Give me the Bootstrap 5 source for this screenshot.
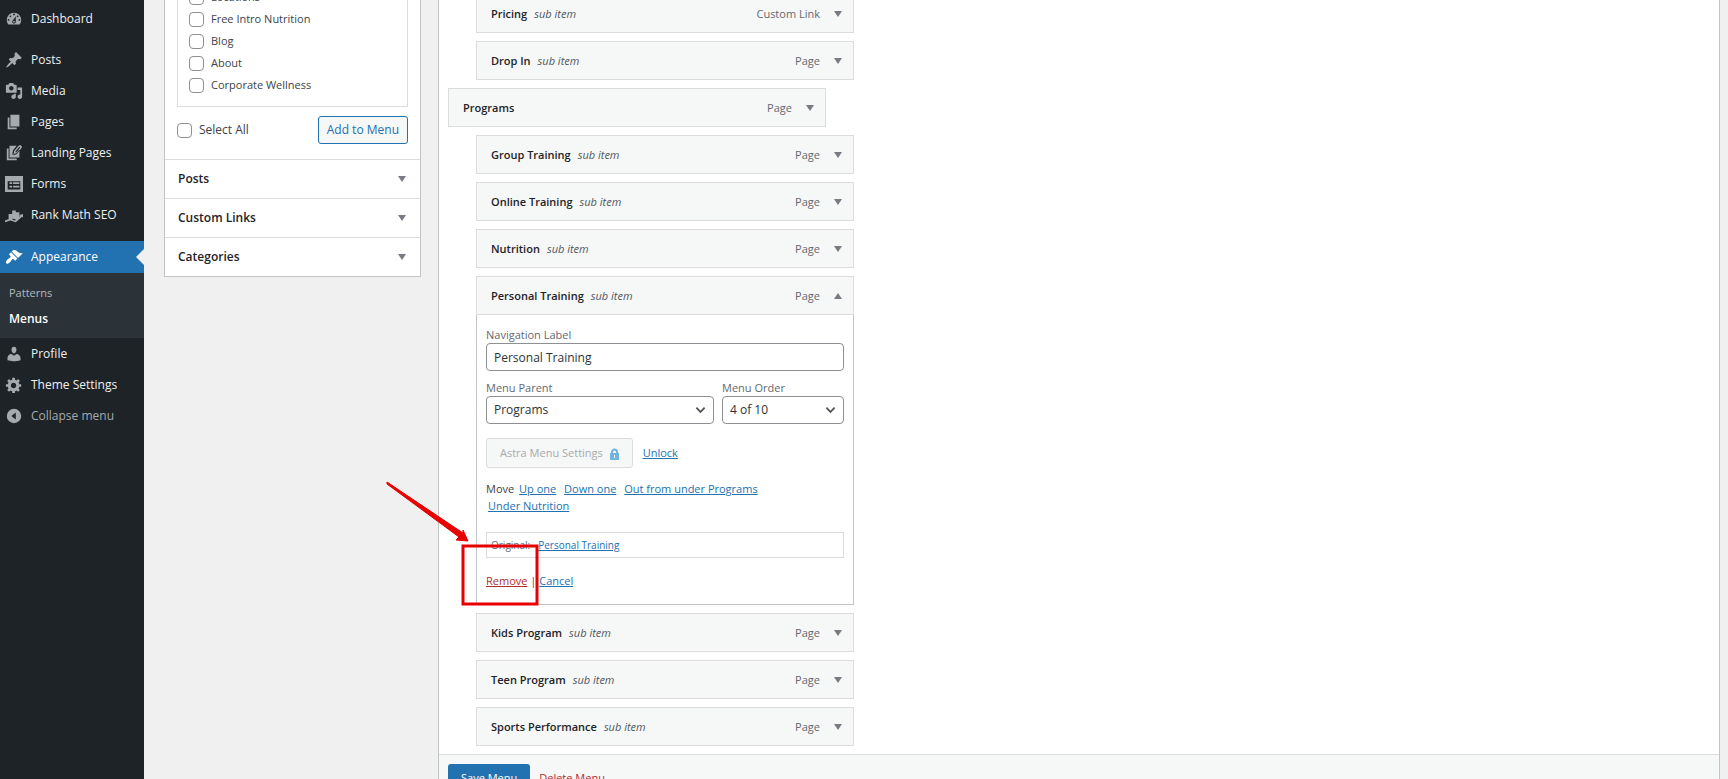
<!DOCTYPE html>
<html lang="en">
<head>
<meta charset="utf-8">
<meta name="viewport" content="width=device-width, initial-scale=1">
<title>Menus</title>
<link rel="stylesheet" href="https://cdn.jsdelivr.net/npm/bootstrap@5.3.0/dist/css/bootstrap.min.css">
<style>
  body { font-family: "Open Sans", "Noto Sans", sans-serif; font-size: 12px; line-height: 16px; color: #3c434a; background: #f0f0f1; }
  a { color: #2271b1; }

  /* admin side menu */
  .side { width: 144px; background: #1d2327; padding-top: 3px; }
  .side-link { height: 31px; padding-left: 5px; gap: 8px; font-size: 12px; color: #f0f0f1; }
  .side-link svg { width: 18px; height: 18px; fill: #a7aaad; }
  .side-link.current { height: 32px; margin-top: 11px; background: #2271b1; color: #fff; position: relative; }
  .side-link.current svg { fill: #fff; }
  .side-link.current::after { content: ""; position: absolute; right: 0; top: 8px; border: 8px solid transparent; border-left: 0; border-right-color: #f0f0f1; }
  .side-link.fold { color: #a7aaad; font-size: 12px; }
  .side-gap { height: 10px; }
  .side-sub { background: #2c3338; padding: 7px 9px 6px; }
  .side-sub a { display: block; font-size: 11px; line-height: 26px; color: #b4b9be; text-decoration: none; }
  .side-sub a.on { font-size: 12px; color: #fff; font-weight: 600; }

  /* source boxes */
  .sources { width: 257px; margin-left: 20px; }
  .source-card { background: #fff; border: 1px solid #c3c4c7; margin-top: -32px; }
  .pick-list { margin: 0 12px; border: 1px solid #dcdcde; padding: 16px 11px 10px; font-size: 11px; }
  .pick { height: 22px; gap: 7px; }
  .tick { appearance: none; width: 15px; height: 15px; margin: 0; border: 1px solid #8c8f94; border-radius: 4px; background: #fff; }
  .pick-foot { padding: 9px 12px 15px; }
  .btn-wp { font-size: 11px; line-height: 16px; border-radius: 3px; padding: 5px 9px; }
  .btn-add { font-size: 12px; color: #2271b1; background: #f6f7f7; border-color: #2271b1; padding: 5px 8px; }
  .source-head { height: 39px; border: 0; border-top: 1px solid #dcdcde; background: #fff; padding: 0 14px 0 13px; color: #1d2327; font-weight: 600; }
  .caret { width: 8px; height: 6px; fill: #787c82; }

  /* menu structure */
  .structure { margin: 0 8px 0 17px; background: #fff; border: 1px solid #c3c4c7; border-width: 0 1px; }
  .tree { padding: 0 9px 8px; margin-top: -6px; gap: 8px; }
  .node { width: 378px; }
  .node.sub { margin-left: 28px; }
  .node-bar { height: 39px; background: #f6f7f7; border: 1px solid #dcdcde; padding: 0 11px 0 14px; }
  .node-bar b { font-size: 11px; font-weight: 600; color: #1d2327; }
  .node-bar i { font-size: 11px; color: #50575e; margin-left: 7px; }
  .node-bar .kind { font-size: 11px; color: #646970; margin-right: 14px; }
  .fold-btn { border: 0; background: none; padding: 0; line-height: 0; }
  .node-body { position: relative; border: 1px solid #c3c4c7; border-top: 0; padding: 12px 9px 15px; }
  .node-body label { display: block; line-height: 16px; color: #646970; font-size: 11px; }
  .field { display: block; width: 100%; height: 28px; font-size: 12px; padding: 0 7px; border: 1px solid #8c8f94; border-radius: 4px; color: #2c3338; background-color: #fff; }
  select.field { appearance: none; background: #fff url("data:image/svg+xml,%3Csvg xmlns='http://www.w3.org/2000/svg' viewBox='0 0 12 8'%3E%3Cpath d='M1.500 1.500l4.500 4.500 4.500-4.500' fill='none' stroke='%23555' stroke-width='2'/%3E%3C/svg%3E") no-repeat right 7px center / 11px 8px; }
  .field-row { margin-top: 9px; }
  .order { width: 122px; }
  .unlock-row { margin-top: 14px; gap: 10px; font-size: 11px; }
  .btn-astra, .btn-astra:disabled { color: #a7aaad; background: #f6f7f7; border-color: #dcdcde; opacity: 1; padding: 6px 13px; }
  .btn-astra svg { width: 9px; height: 12px; }
  .moves { font-size: 11px; margin-top: 12px; line-height: 17px; padding-right: 60px; }
  .moves a { margin: 0 3px 0 2px; }
  .origin { font-size: 10px; margin-top: 18px; height: 26px; border: 1px solid #dcdcde; padding: 0 4px; color: #646970; gap: 8px; }
  .node-links { margin-top: 14px; line-height: 17px; font-size: 11px; }
  a.danger { color: #b32d2e; }
  .callout-mark { position: absolute; left: -98px; bottom: -4px; width: 160px; height: 130px; pointer-events: none; }
  .save-bar { background: #f6f7f7; border-top: 1px solid #dcdcde; padding: 9px; gap: 9px; font-size: 11px; }
  .btn-save { background: #2271b1; color: #fff; padding: 5px 12px; }
</style>
</head>
<body class="vh-100 overflow-hidden">
<svg class="d-none" aria-hidden="true">
  <symbol id="down" viewBox="0 0 8 6"><path d="M0 0h8L4 6z"/></symbol>
  <symbol id="up" viewBox="0 0 8 6"><path d="M0 6h8L4 0z"/></symbol>
</svg>
<div class="d-flex vh-100">
  <nav class="side flex-shrink-0" aria-label="Admin">
    <a href="#" class="side-link d-flex align-items-center text-decoration-none"><svg viewBox="0 0 20 20"><path fill-rule="evenodd" d="M3.760 16h12.480c1.100-1.370 1.760-3.110 1.760-5 0-4.420-3.580-8-8-8s-8 3.580-8 8c0 1.890.660 3.630 1.760 5zM10 4c.550 0 1 .450 1 1s-.450 1-1 1-1-.450-1-1 .450-1 1-1zM6 6c.550 0 1 .450 1 1s-.450 1-1 1-1-.450-1-1 .450-1 1-1zm8 0c.550 0 1 .450 1 1s-.450 1-1 1-1-.450-1-1 .450-1 1-1zm-5.370 5.550L12 7v6c0 1.100-.9 2-2 2s-2-.9-2-2c0-.570.240-1.080.630-1.450zM4 10c.550 0 1 .450 1 1s-.450 1-1 1-1-.450-1-1 .450-1 1-1zm12 0c.550 0 1 .450 1 1s-.450 1-1 1-1-.450-1-1 .450-1 1-1zm-5 3c0-.550-.450-1-1-1s-1 .450-1 1 .450 1 1 1 1-.450 1-1z"/></svg>Dashboard</a>
    <div class="side-gap"></div>
    <a href="#" class="side-link d-flex align-items-center text-decoration-none"><svg viewBox="0 0 20 20"><path d="M10.440 3.020l1.820-1.820 6.360 6.350-1.830 1.820c-1.050-.680-2.480-.570-3.410.360l-.750.750c-.920.930-1.040 2.350-.350 3.410l-1.830 1.820-2.410-2.410-2.800 2.790c-.420.420-3.380 2.710-3.800 2.290s1.860-3.390 2.280-3.810l2.790-2.790L4.100 9.360l1.830-1.820c1.050.690 2.480.570 3.400-.360l.750-.750c.930-.920 1.050-2.350.360-3.410z"/></svg>Posts</a>
    <a href="#" class="side-link d-flex align-items-center text-decoration-none"><svg viewBox="0 0 20 20"><path fill-rule="evenodd" d="M13 11V4c0-.550-.450-1-1-1h-1.670L9 1H5L3.670 3H2c-.550 0-1 .450-1 1v7c0 .550.450 1 1 1h10c.550 0 1-.450 1-1zM7 4.500c1.380 0 2.500 1.120 2.500 2.500S8.380 9.500 7 9.500 4.500 8.380 4.500 7 5.620 4.500 7 4.500zM14 6h5v10.500c0 1.380-1.120 2.500-2.500 2.500S14 17.880 14 16.500s1.120-2.500 2.500-2.500c.170 0 .340.020.5.050V9h-3V6zm-4 8.050V13h2v3.500c0 1.380-1.120 2.500-2.500 2.500S7 17.880 7 16.500 8.120 14 9.500 14c.170 0 .340.020.5.050z"/></svg>Media</a>
    <a href="#" class="side-link d-flex align-items-center text-decoration-none"><svg viewBox="0 0 20 20"><path d="M6 15V2h10v13H6zm-1 1h8v2H3V5h2v11z"/></svg>Pages</a>
    <a href="#" class="side-link d-flex align-items-center text-decoration-none"><svg viewBox="0 0 20 20"><path d="M5 15V2h8l-4 5-1 5 5-2 3-4v9zM4 16h9v2H2V5h2zM10 8l5-6 2-1 2 2-1 2-5 6-3.500 1.500zM11.500 8.500l1 1L17 4l-1-1z" fill-rule="evenodd"/></svg>Landing Pages</a>
    <a href="#" class="side-link d-flex align-items-center text-decoration-none"><svg viewBox="0 0 20 20"><path fill-rule="evenodd" d="M0 1h20v18H0zM3 7v9h14V7zM5 8h3v2H5zM9 8h7v2H9zM5 12h3v2H5zM9 12h7v2H9z"/></svg>Forms</a>
    <a href="#" class="side-link d-flex align-items-center text-decoration-none"><svg viewBox="0 0 20 20"><path d="M4 9h4v6l-4 1zM8 5h4v10l-4-1zM12 7h4v6l-4 3zM0 16l6-2 5 2 6-5-1-1 4-1v4l-1-1-7 6-6-2-6 2z"/></svg>Rank Math SEO</a>
    <a href="#" class="side-link current d-flex align-items-center text-decoration-none"><svg viewBox="0 0 20 20"><path d="M14.480 11.060L7.410 3.990l1.500-1.500c.5-.560 2.300-.470 3.510.320 1.210.8 1.430 1.280 2.910 2.100 1.180.640 2.450 1.260 4.450.850zm-.710.710L6.700 4.700 4.930 6.470c-.390.390-.390 1.020 0 1.410l1.060 1.060c.390.390.390 1.030 0 1.420-.6.6-1.430 1.110-2.210 1.690-.350.260-.7.530-1.010.840C1.430 14.230.4 16.080 1.400 17.070c.990 1 2.840-.030 4.180-1.360.310-.310.580-.660.850-1.020.570-.780 1.080-1.610 1.690-2.210.390-.390 1.020-.390 1.410 0l1.060 1.060c.390.390 1.020.390 1.410 0z"/></svg>Appearance</a>
    <div class="side-sub"><a href="#">Patterns</a><a href="#" class="on">Menus</a></div>
    <a href="#" class="side-link d-flex align-items-center text-decoration-none"><svg viewBox="0 0 20 20"><path d="M10 9.250c-2.270 0-2.730-3.440-2.730-3.440C7 4.020 7.820 2 9.970 2c2.160 0 2.980 2.020 2.710 3.810 0 0-.410 3.440-2.680 3.440zm0 2.570L12.720 10c2.390 0 4.520 2.330 4.520 4.530v2.490s-3.650 1.130-7.240 1.130c-3.650 0-7.240-1.130-7.240-1.130v-2.490c0-2.250 1.940-4.480 4.470-4.480z"/></svg>Profile</a>
    <a href="#" class="side-link d-flex align-items-center text-decoration-none"><svg viewBox="0 0 20 20"><path fill-rule="evenodd" d="M18 12h-2.180c-.170.7-.440 1.350-.810 1.930l1.540 1.540-2.100 2.100-1.540-1.540c-.580.360-1.230.630-1.910.790V19H8v-2.180c-.680-.160-1.330-.430-1.910-.790l-1.540 1.540-2.120-2.120 1.540-1.540c-.360-.580-.630-1.230-.790-1.910H1V9.030h2.170c.160-.7.440-1.350.8-1.940L2.430 5.550l2.100-2.100 1.540 1.540c.580-.370 1.240-.640 1.930-.810V2h3v2.180c.680.160 1.330.430 1.910.790l1.540-1.540 2.120 2.120-1.540 1.540c.360.590.640 1.240.8 1.940H18V12zm-8.500 1.500c1.660 0 3-1.340 3-3s-1.340-3-3-3-3 1.340-3 3 1.340 3 3 3z"/></svg>Theme Settings</a>
    <button type="button" class="side-link fold d-flex align-items-center border-0 bg-transparent w-100"><svg viewBox="0 0 20 20"><path fill-rule="evenodd" d="M10 2a8 8 0 1 0 0 16 8 8 0 0 0 0-16zM12 6v8l-5-4z"/></svg>Collapse menu</button>
  </nav>

  <aside class="sources flex-shrink-0">
    <div class="source-card">
      <div class="pick-list">
        <div class="pick d-flex align-items-center"><input class="tick" type="checkbox" id="p0"><label for="p0">Locations</label></div>
        <div class="pick d-flex align-items-center"><input class="tick" type="checkbox" id="p1"><label for="p1">Free Intro Nutrition</label></div>
        <div class="pick d-flex align-items-center"><input class="tick" type="checkbox" id="p2"><label for="p2">Blog</label></div>
        <div class="pick d-flex align-items-center"><input class="tick" type="checkbox" id="p3"><label for="p3">About</label></div>
        <div class="pick d-flex align-items-center"><input class="tick" type="checkbox" id="p4"><label for="p4">Corporate Wellness</label></div>
      </div>
      <div class="pick-foot d-flex justify-content-between align-items-center">
        <div class="pick d-flex align-items-center"><input class="tick" type="checkbox" id="all"><label for="all">Select All</label></div>
        <button type="button" class="btn btn-wp btn-add">Add to Menu</button>
      </div>
      <button type="button" class="source-head d-flex w-100 justify-content-between align-items-center">Posts <svg class="caret"><use href="#down"/></svg></button>
      <button type="button" class="source-head d-flex w-100 justify-content-between align-items-center">Custom Links <svg class="caret"><use href="#down"/></svg></button>
      <button type="button" class="source-head d-flex w-100 justify-content-between align-items-center">Categories <svg class="caret"><use href="#down"/></svg></button>
    </div>
  </aside>

  <main class="structure flex-grow-1 d-flex flex-column">
    <div class="tree d-flex flex-column">
      <div class="node sub"><div class="node-bar d-flex align-items-center"><b>Pricing</b><i>sub item</i><span class="kind ms-auto">Custom Link</span><button type="button" class="fold-btn" aria-label="Expand Pricing"><svg class="caret"><use href="#down"/></svg></button></div></div>
      <div class="node sub"><div class="node-bar d-flex align-items-center"><b>Drop In</b><i>sub item</i><span class="kind ms-auto">Page</span><button type="button" class="fold-btn" aria-label="Expand Drop In"><svg class="caret"><use href="#down"/></svg></button></div></div>
      <div class="node"><div class="node-bar d-flex align-items-center"><b>Programs</b><span class="kind ms-auto">Page</span><button type="button" class="fold-btn" aria-label="Expand Programs"><svg class="caret"><use href="#down"/></svg></button></div></div>
      <div class="node sub"><div class="node-bar d-flex align-items-center"><b>Group Training</b><i>sub item</i><span class="kind ms-auto">Page</span><button type="button" class="fold-btn" aria-label="Expand Group Training"><svg class="caret"><use href="#down"/></svg></button></div></div>
      <div class="node sub"><div class="node-bar d-flex align-items-center"><b>Online Training</b><i>sub item</i><span class="kind ms-auto">Page</span><button type="button" class="fold-btn" aria-label="Expand Online Training"><svg class="caret"><use href="#down"/></svg></button></div></div>
      <div class="node sub"><div class="node-bar d-flex align-items-center"><b>Nutrition</b><i>sub item</i><span class="kind ms-auto">Page</span><button type="button" class="fold-btn" aria-label="Expand Nutrition"><svg class="caret"><use href="#down"/></svg></button></div></div>
      <div class="node sub">
        <div class="node-bar d-flex align-items-center"><b>Personal Training</b><i>sub item</i><span class="kind ms-auto">Page</span><button type="button" class="fold-btn" aria-label="Collapse Personal Training"><svg class="caret"><use href="#up"/></svg></button></div>
        <div class="node-body">
          <label for="nav-label">Navigation Label</label>
          <input class="field" id="nav-label" type="text" value="Personal Training">
          <div class="field-row d-flex gap-2">
            <div class="flex-grow-1"><label for="parent">Menu Parent</label><select class="field" id="parent"><option>Programs</option></select></div>
            <div class="order"><label for="order">Menu Order</label><select class="field" id="order"><option>4 of 10</option></select></div>
          </div>
          <div class="unlock-row d-flex align-items-center">
            <button type="button" class="btn btn-wp btn-astra" disabled>Astra Menu Settings <svg class="ms-1" viewBox="0 0 9 12"><path d="M2 6V4a2.500 2.500 0 0 1 5 0v2" fill="none" stroke="#72b5dc" stroke-width="2"/><path d="M0 5h9v7H0z" fill="#72b5dc"/><path d="M4 7h1v3H4z" fill="#fff"/></svg></button>
            <a href="#">Unlock</a>
          </div>
          <div class="moves">Move <a href="#">Up one</a> <a href="#">Down one</a> <a href="#">Out from under Programs</a><br><a href="#">Under Nutrition</a></div>
          <div class="origin d-flex align-items-center"><span>Original:</span><a href="#">Personal Training</a></div>
          <div class="node-links"><a href="#" class="danger">Remove</a> | <a href="#">Cancel</a></div>
          <svg class="callout-mark" viewBox="0 0 160 130" aria-hidden="true"><path d="M8 4l76 51v-3l5 11-12-1 3-3L8 6z" fill="#e80000" stroke="#e80000" stroke-linejoin="round"/><rect x="84" y="68" width="74" height="58" fill="none" stroke="#e80000" stroke-width="3"/></svg>
        </div>
      </div>
      <div class="node sub"><div class="node-bar d-flex align-items-center"><b>Kids Program</b><i>sub item</i><span class="kind ms-auto">Page</span><button type="button" class="fold-btn" aria-label="Expand Kids Program"><svg class="caret"><use href="#down"/></svg></button></div></div>
      <div class="node sub"><div class="node-bar d-flex align-items-center"><b>Teen Program</b><i>sub item</i><span class="kind ms-auto">Page</span><button type="button" class="fold-btn" aria-label="Expand Teen Program"><svg class="caret"><use href="#down"/></svg></button></div></div>
      <div class="node sub"><div class="node-bar d-flex align-items-center"><b>Sports Performance</b><i>sub item</i><span class="kind ms-auto">Page</span><button type="button" class="fold-btn" aria-label="Expand Sports Performance"><svg class="caret"><use href="#down"/></svg></button></div></div>
    </div>
    <div class="save-bar d-flex align-items-center">
      <button type="button" class="btn btn-wp btn-save">Save Menu</button>
      <a href="#" class="danger">Delete Menu</a>
    </div>
  </main>
</div>
<script src="https://cdn.jsdelivr.net/npm/bootstrap@5.3.0/dist/js/bootstrap.bundle.min.js"></script>
</body>
</html>
